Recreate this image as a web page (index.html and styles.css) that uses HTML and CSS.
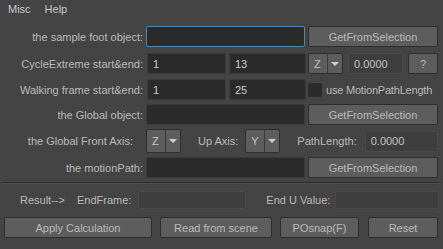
FILE: index.html
```html
<!DOCTYPE html>
<html>

<head>
    <title>Foot Cycle Tool</title>
    <link rel="stylesheet" href="styles.css">
</head>

<body>
    <div class="menubar">
        <span>Misc</span>
        <span>Help</span>
    </div>

    <div class="form">
        <div class="row">
            <label class="lbl">the sample foot object:</label>
            <input class="field long focus" type="text">
            <button class="btn sel">GetFromSelection</button>
        </div>

        <div class="row r2">
            <label class="lbl">CycleExtreme start&amp;end:</label>
            <input class="field num1" type="text" value="1">
            <input class="field num2" type="text" value="13">
            <div class="combo axis-r">
                <span class="val">Z</span>
                <span class="arrow"></span>
            </div>
            <input class="field dim small" type="text" value="0.0000">
            <button class="btn help">?</button>
        </div>

        <div class="row r3">
            <label class="lbl">Walking frame start&amp;end:</label>
            <input class="field num1" type="text" value="1">
            <input class="field num2" type="text" value="25">
            <label class="check"><span class="box"></span>use MotionPathLength</label>
        </div>

        <div class="row">
            <label class="lbl">the Global object:</label>
            <input class="field long" type="text">
            <button class="btn sel">GetFromSelection</button>
        </div>

        <div class="row tall">
            <label class="lbl axis-lbl">the Global Front Axis:</label>
            <div class="combo">
                <span class="val">Z</span>
                <span class="arrow"></span>
            </div>
            <span class="txt up">Up Axis:</span>
            <div class="combo">
                <span class="val">Y</span>
                <span class="arrow"></span>
            </div>
            <span class="txt plen">PathLength:</span>
            <input class="field dim plen-val" type="text" value="0.0000">
        </div>

        <div class="row">
            <label class="lbl">the motionPath:</label>
            <input class="field long" type="text">
            <button class="btn sel">GetFromSelection</button>
        </div>
    </div>

    <div class="sep"></div>

    <div class="result">
        <span class="txt first">Result--&gt;</span>
        <span class="txt">EndFrame:</span>
        <input class="field dim end-frame" type="text">
        <span class="txt">End U Value:</span>
        <input class="field dim end-u" type="text">
    </div>

    <div class="actions">
        <button class="btn apply">Apply Calculation</button>
        <button class="btn read">Read from scene</button>
        <button class="btn snap">POsnap(F)</button>
        <button class="btn reset">Reset</button>
    </div>
</body>

</html>
```

FILE: styles.css
```css
* {
    margin: 0;
    box-sizing: border-box;
}

body {
    background-color: #444444;
    color: #bbbbbb;
    font-family: "Liberation Sans", Arial, sans-serif;
    font-size: 11px;
    width: 443px;
    height: 249px;
    overflow: hidden;
    white-space: nowrap;
}

.menubar {
    display: flex;
    gap: 14px;
    height: 20px;
    padding: 3px 0 0 8px;
    color: #c8c8c8;
}

.form {
    display: flex;
    flex-direction: column;
    gap: 4px;
    padding-top: 6px;
}

.row {
    display: flex;
    align-items: center;
    height: 21px;
}

.row.r2 {
    margin-top: 2px;
}

.row.r3 {
    margin-top: 1px;
}

.row.tall {
    height: 24px;
}

.lbl {
    width: 143px;
    flex: none;
    text-align: right;
    margin-right: 3px;
}

.lbl.axis-lbl {
    padding-right: 10px;
}

.txt {
    flex: none;
}

.field {
    flex: none;
    height: 21px;
    background-color: #2b2b2b;
    border: 1px solid #3a3a3a;
    border-radius: 2px;
    color: #cccccc;
    font-family: inherit;
    font-size: 11px;
    padding: 0 5px;
    outline: none;
}

.field.focus {
    border-color: #5285a6;
}

.field.long {
    width: 159px;
}

.field.num1 {
    width: 79px;
    margin-left: 1px;
}

.field.num2 {
    width: 77px;
    margin-left: 3px;
}

.field.dim {
    background-color: #3e3e3e;
    border-color: #4a4a4a;
    color: #c4c4c4;
}

.field.small {
    width: 55px;
    margin-left: 5px;
}

.btn {
    flex: none;
    height: 21px;
    background-color: #5d5d5d;
    border: 1px solid #2e2e2e;
    border-radius: 2px;
    color: #bbbbbb;
    font-family: inherit;
    font-size: 11px;
    padding: 0;
}

.btn.sel {
    width: 130px;
    margin-left: 3px;
}

.btn.help {
    width: 30px;
    margin-left: 5px;
}

.combo {
    flex: none;
    display: flex;
    width: 35px;
    height: 24px;
    background-color: #5d5d5d;
    border: 1px solid #2e2e2e;
    border-radius: 2px;
}

.combo.axis-r {
    height: 21px;
    margin-left: 2px;
}

.combo .val {
    width: 19px;
    border-right: 1px solid #3a3a3a;
    display: flex;
    align-items: center;
    padding-left: 5px;
    color: #c4c4c4;
}

.combo .arrow {
    flex: 1;
    display: flex;
    align-items: center;
    justify-content: center;
}

.combo .arrow::after {
    content: "";
    border-left: 4px solid transparent;
    border-right: 4px solid transparent;
    border-top: 4px solid #cfcfcf;
}

.check {
    display: flex;
    align-items: center;
    margin-left: 2px;
    gap: 4px;
    letter-spacing: -0.2px;
}

.check .box {
    width: 14px;
    height: 14px;
    background-color: #2b2b2b;
    border-radius: 2px;
}

.txt.up {
    margin: 0 7px 0 17px;
}

.txt.plen {
    margin: 0 8px 0 17px;
}

.field.plen-val {
    width: 73px;
}

.sep {
    margin: 4px 2px 0 2px;
    height: 2px;
    border-top: 1px solid #2e2e2e;
    border-bottom: 1px solid #505050;
}

.result {
    display: flex;
    align-items: center;
    height: 18px;
    margin-top: 7px;
    padding-left: 20px;
}

.result .first {
    margin-right: 12px;
}

.field.end-frame {
    width: 108px;
    height: 18px;
    margin: 0 20px 0 7px;
}

.field.end-u {
    width: 104px;
    height: 18px;
    margin-left: 5px;
}

.actions {
    display: flex;
    gap: 8px;
    margin-top: 8px;
    padding-left: 4px;
}

.btn.apply {
    width: 148px;
}

.btn.read {
    width: 112px;
}

.btn.snap {
    width: 79px;
}

.btn.reset {
    width: 70px;
    margin-left: 1px;
}
```
